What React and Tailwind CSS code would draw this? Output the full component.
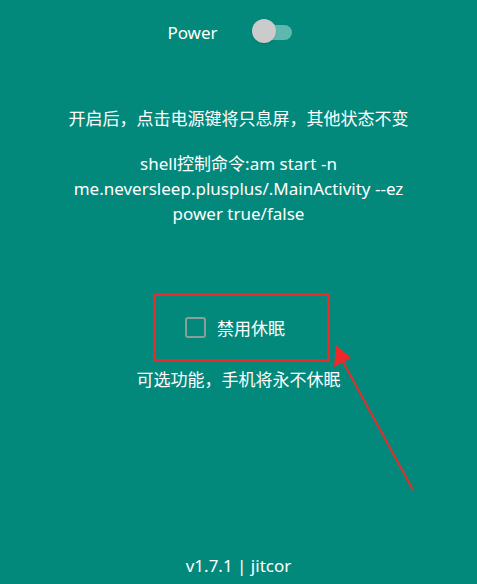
const cjk = { fontFamily: '"Noto Sans CJK SC", "Noto Sans", sans-serif' };

export default function App() {
  return (
    <div
      className="relative flex h-[584px] w-full flex-col items-center overflow-hidden bg-[#03897c] text-white"
      style={{ fontFamily: '"Noto Sans", "Noto Sans CJK SC", sans-serif' }}
    >
      {/* Power switch */}
      <div className="mt-[19px] flex h-[26px] items-center gap-[34px] pr-[18px]">
        <span className="text-[17px] leading-none">Power</span>
        <div className="relative h-[26px] w-[40px]">
          <div className="absolute left-[10px] top-[6px] h-[15px] w-[30px] rounded-full bg-[#5fb8ae]" />
          <div className="absolute left-0 top-0 h-[24px] w-[24px] rounded-full bg-[#cbcbcb] shadow" />
        </div>
      </div>

      <p className="mt-[60px] text-[17px] leading-[25px]" style={cjk}>
        开启后，点击电源键将只息屏，其他状态不变
      </p>

      <div className="mt-[21px] text-center text-[17px] leading-[25px]">
        <p>shell控制命令:am start -n</p>
        <p>me.neversleep.plusplus/.MainActivity --ez</p>
        <p>power true/false</p>
      </div>

      {/* Disable sleep */}
      <div className="mt-[67px] ml-[5px] flex h-[69px] w-[177px] items-center justify-center border-[3px] border-[#ec2a2a] pr-[12px]">
        <label className="flex items-center gap-[11px]">
          <span className="h-[21px] w-[21px] rounded-[3px] border-2 border-[#8b9e9b]" />
          <span className="text-[17px] leading-none" style={cjk}>禁用休眠</span>
        </label>
      </div>
      <p className="mt-[4px] text-[17px] leading-[25px]" style={cjk}>
        可选功能，手机将永不休眠
      </p>

      <p className="mt-auto mb-[6px] text-[17px] leading-[25px]">v1.7.1 | jitcor</p>

      {/* annotation arrow */}
      <svg
        className="absolute left-0 top-0"
        width="477"
        height="584"
        viewBox="0 0 477 584"
      >
        <line x1="413" y1="490" x2="342" y2="360" stroke="#ec2a2a" strokeWidth="2" />
        <polygon points="336,345 334,367 351,358" fill="#ec2a2a" />
      </svg>
    </div>
  );
}
